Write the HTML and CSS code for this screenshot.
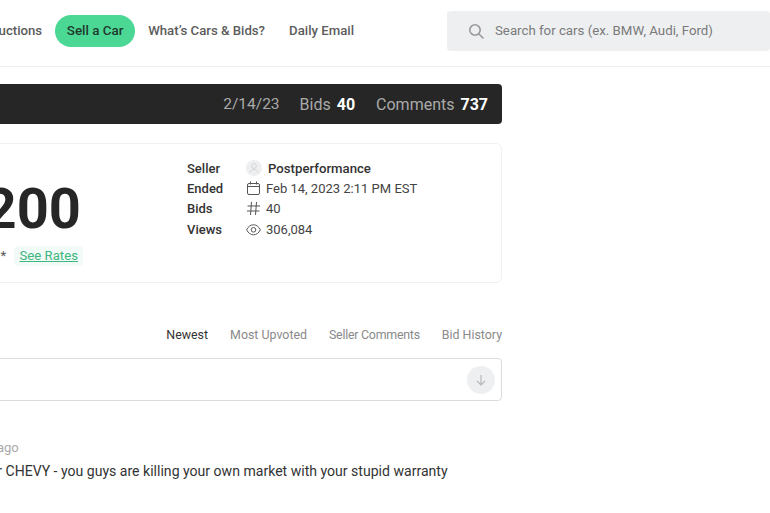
FILE: index.html
```html
<!DOCTYPE html>
<html lang="en">
<head>
<meta charset="utf-8">
<title>Cars &amp; Bids</title>
<link rel="stylesheet" href="styles.css">
</head>
<body>
<div class="page">
  <header class="topbar">
    <nav class="nav">
      <a class="nav-link">Auctions</a>
      <a class="nav-pill">Sell a Car</a>
      <a class="nav-link">What’s Cars &amp; Bids?</a>
      <a class="nav-link">Daily Email</a>
    </nav>
    <div class="search">
      <svg class="search-icon" width="16" height="16" viewBox="0 0 16 16" fill="none" stroke="#9a9a9a" stroke-width="1.6"><circle cx="7" cy="7" r="5.2"/><path d="M11 11l4 4" stroke-linecap="round"/></svg>
      <span>Search for cars (ex. BMW, Audi, Ford)</span>
    </div>
  </header>
  <main class="main">
    <div class="statbar">
      <span class="date">2/14/23</span>
      <span class="stat">Bids <b>40</b></span>
      <span class="stat stat-last">Comments <b>737</b></span>
    </div>
    <section class="card">
      <div class="price-col">
        <div class="price">$45,200</div>
        <div class="fee">Buyer's fee: $2,260* <a class="rates">See Rates</a></div>
      </div>
      <dl class="facts">
        <dt>Seller</dt>
        <dd class="seller"><svg class="avatar" width="16" height="16" viewBox="0 0 16 16"><circle cx="8" cy="8" r="8" fill="#eeeff1"/><circle cx="8" cy="6" r="2.4" fill="none" stroke="#d4d4d4"/><path d="M4 12.500c.5-2 2-3 4-3s3.500 1 4 3" fill="none" stroke="#d4d4d4"/></svg><b>Postperformance</b></dd>
        <dt>Ended</dt>
        <dd><svg width="15" height="15" viewBox="0 0 15 15" fill="none" stroke="#555" stroke-width="1"><rect x="1.500" y="2.500" width="12" height="11" rx="1.500"/><path d="M1.500 5.500h12M4.500 .5v3M10.500 .5v3"/></svg>Feb 14, 2023 2:11 PM EST</dd>
        <dt>Bids</dt>
        <dd><svg width="15" height="15" viewBox="0 0 15 15" fill="none" stroke="#555" stroke-width="1"><path d="M5.500 1L4.500 14M10.500 1L9.500 14M1.500 5h12.500M1 10h12.500"/></svg>40</dd>
        <dt>Views</dt>
        <dd><svg width="15" height="15" viewBox="0 0 15 15" fill="none" stroke="#555" stroke-width="1"><path d="M.6 7.800C2.400 4.300 4.700 2.800 7.500 2.800s5.100 1.500 6.900 5c-1.800 3.400-4.100 5-6.900 5S2.400 11.200.6 7.800z"/><circle cx="7.500" cy="7.800" r="2.300"/></svg>306,084</dd>
      </dl>
    </section>
    <div class="tabs">
      <a class="tab tab-active">Newest</a>
      <a class="tab">Most Upvoted</a>
      <a class="tab tab-tight">Seller Comments</a>
      <a class="tab">Bid History</a>
    </div>
    <div class="comment-box">
      <span class="send"><svg width="12" height="12" viewBox="0 0 12 12" fill="none" stroke="#b8b8b8" stroke-width="1.200"><path d="M6 1v10M2 7l4 4 4-4"/></svg></span>
    </div>
    <article class="comment">
      <div class="comment-meta">2 years ago</div>
      <p class="comment-text">Bad news for CHEVY - you guys are killing your own market with your stupid warranty</p>
      <div class="comment-actions"><span>Reply</span><span>Flag</span></div>
    </article>
  </main>
</div>
</body>
</html>
```
FILE: styles.css
```css
* { box-sizing: border-box; }
html, body { margin: 0; height: 100%; overflow: hidden; background: #fff; }
body { font-family: Roboto, "Liberation Sans", sans-serif; color: #262626; }
.page { width: 1000px; margin-left: -230px; }
.topbar { height: 67px; border-bottom: 1px solid #eeeff1; display: flex; align-items: center; padding-bottom: 5px; }
.nav { display: flex; align-items: center; gap: 24px; width: 677px; justify-content: flex-end; padding-right: 93px; font-size: 13.2px; font-weight: 500; white-space: nowrap; }
.nav-link { color: #5c5c5c; }
.nav-pill { background: #4bd895; color: #1f3a2c; font-size: 13.4px; height: 32px; border-radius: 16px; width: 80px; display: flex; align-items: center; justify-content: center; margin: 0 -11px 0 -11px; }
.search { flex: 1; height: 40px; background: #eeeff1; border-radius: 4px; display: flex; align-items: center; gap: 11px; padding-left: 21px; color: #7a7a7a; font-size: 13.25px; }
.main { width: 732px; padding-top: 17px; }
.statbar { height: 40px; background: #262626; border-radius: 4px; display: flex; justify-content: flex-end; align-items: center; gap: 20px; padding-right: 14px; color: #aaa; font-size: 16px; }
.date { font-size: 15.5px; }
.stat b { color: #fff; margin-left: 2px; font-weight: 700; }
.stat-last { margin-left: 1px; }
.card { margin-top: 19px; height: 140px; border: 1px solid #f1f1f1; border-radius: 6px; display: flex; }
.price-col { width: 416px; text-align: right; padding-right: 106px; }
.price { font-size: 56px; font-weight: 700; line-height: 66px; margin-top: 32px; white-space: nowrap; }
.fee { font-size: 13.2px; color: #555; margin-top: 4px; margin-right: -2px; white-space: nowrap; }
.rates { display: inline-block; margin-left: 5px; padding: 0 5px; height: 20px; line-height: 20px; background: #f2fbf7; color: #3fb67f; text-decoration: underline; border-radius: 4px; }
.facts { margin: 14px 0 0; display: grid; grid-template-columns: 59px 1fr; grid-auto-rows: 20.3px; align-items: center; font-size: 13px; }
.facts dt { font-weight: 500; color: #333; }
.facts dd { margin: 0; display: flex; align-items: center; gap: 5px; color: #444; }
.facts .seller { gap: 6px; font-size: 13.2px; }
.seller b { font-weight: 500; color: #333; }
.tabs { margin-top: 44px; display: flex; justify-content: flex-end; gap: 22px; font-size: 12.4px; line-height: 15px; color: #8a8a8a; }
.tab-active { color: #333; }
.tab-tight { letter-spacing: -0.25px; }
.comment-box { margin-top: 16px; height: 43px; border: 1px solid #dcdcdc; border-radius: 4px; display: flex; justify-content: flex-end; align-items: center; padding-right: 6px; }
.send { width: 28px; height: 28px; border-radius: 50%; background: #eeeff1; display: flex; align-items: center; justify-content: center; }
.comment { margin-top: 39px; padding-left: 150px; }
.comment-meta { font-size: 13px; color: #aaa; line-height: 15px; padding-left: 32px; }
.comment-text { margin: 6px 0 0; font-size: 14.07px; line-height: 20px; color: #333; white-space: nowrap; }
.comment-actions { margin-top: 30px; padding-left: 71px; font-size: 12.4px; color: #888; display: flex; gap: 38px; }
```
